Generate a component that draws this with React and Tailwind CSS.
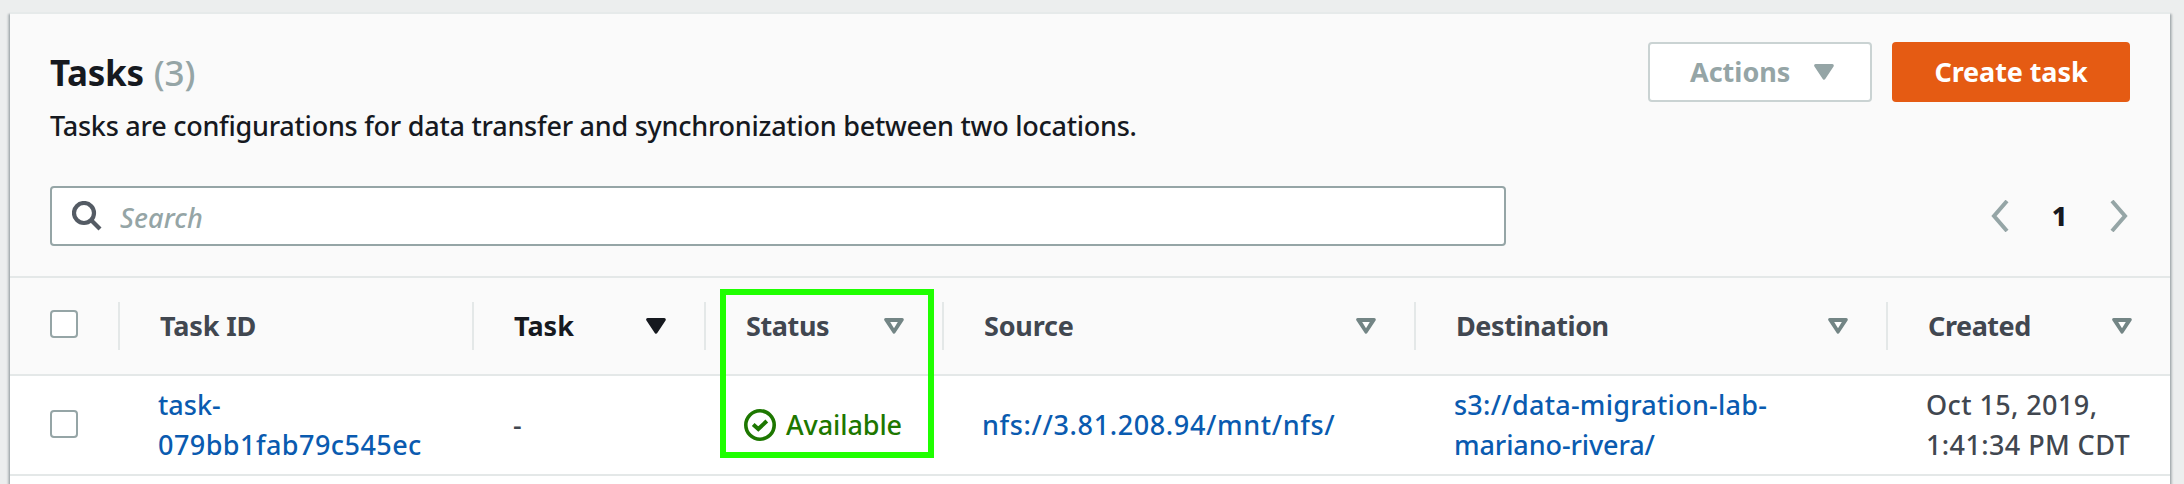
function Caret({ className = '' }) {
  return (
    <svg viewBox="0 0 20 16" className={`h-4 w-5 shrink-0 ${className}`}>
      <path d="M1.7 1.6 H18.3 L10 14.2 Z" fill="currentColor" stroke="currentColor" strokeWidth="3" strokeLinejoin="round" />
    </svg>
  );
}

function CaretOutline() {
  return (
    <svg viewBox="0 0 20 16" className="h-4 w-5 shrink-0 text-[#738585]">
      <path d="M1.7 1.6 H18.3 L10 14.2 Z" fill="currentColor" stroke="currentColor" strokeWidth="3" strokeLinejoin="round" />
      <path d="M6.2 3.9 H13.8 L10 10.2 Z" fill="#fff" />
    </svg>
  );
}

function Checkbox() {
  return <span className="block size-7 rounded-[4px] border-2 border-[#95a5a6] bg-white" />;
}

function HeaderCell({ label, tracking = '', color = 'text-[#414750]', children }) {
  return (
    <div className="flex h-12 items-center justify-between border-l-2 border-[#e4e8e8] pr-[38px] pl-10">
      <span className={`text-[27px] leading-10 font-bold ${tracking} ${color}`}>{label}</span>
      {children}
    </div>
  );
}

const columns = 'grid grid-cols-[108px_354px_232px_238px_472px_472px_284px]';

export default function App() {
  return (
    <div className="relative h-[484px] w-[2184px] overflow-hidden bg-[#eceeee] pt-3 pr-3.5 pl-2.5 font-['Noto_Sans',sans-serif] font-medium text-[#414750]">
      <main className="h-[500px] border-t-2 border-[#e6eaea] bg-white shadow-[0_2px_2px_0_rgba(0,28,36,0.3),2px_2px_2px_0_rgba(0,28,36,0.22),-2px_2px_2px_0_rgba(0,28,36,0.22)]">
        <header className="h-[262px] bg-[#fafafa] px-10 pt-7">
          <div className="flex items-start justify-between">
            <div className="pt-[9px]">
              <h1 className="flex gap-2.5 text-[35px] leading-[44px] text-[#16191f]">
                <span className="font-bold tracking-[-0.3px]">Tasks</span>
                <span className="tracking-[-0.1px] text-[#95a5a6]">(3)</span>
              </h1>
              <p className="mt-[11px] text-[27px] leading-10 tracking-[-0.25px] whitespace-nowrap text-[#16191f]">
                Tasks are configurations for data transfer and synchronization between two locations.
              </p>
            </div>
            <div className="flex gap-5 text-[27px] font-bold">
              <button className="flex h-[60px] w-[224px] items-center justify-between rounded-[4px] border-2 border-[#cad3d3] bg-white pr-9 pl-10 text-[#95a5a6]">
                Actions
                <Caret />
              </button>
              <button className="h-[60px] w-[238px] rounded-[4px] bg-[#e55b13] tracking-[-0.1px] text-white">
                Create task
              </button>
            </div>
          </div>
          <div className="mt-10 flex items-center justify-between">
            <div className="flex h-[60px] w-[1456px] items-center gap-[18px] rounded-[4px] border-2 border-[#95a5a6] bg-white pl-5">
              <svg viewBox="0 0 30 30" className="size-[30px] text-[#545b64]" fill="none" stroke="currentColor" strokeWidth="4.2">
                <circle cx="12" cy="12" r="10" />
                <path d="M19 19 L28 28" />
              </svg>
              <span className="pt-[3px] text-[27px] leading-10 tracking-[0.15px] text-[#95a5a6] italic">Search</span>
            </div>
            <nav className="flex items-center text-[#95a5a6]">
              <svg viewBox="0 0 18 32" className="h-8 w-[18px]" fill="none" stroke="currentColor" strokeWidth="4">
                <path d="M16 1 L3 16 L16 31" />
              </svg>
              <span className="w-[101px] text-center text-[27px] leading-10 font-extrabold text-[#16191f]">1</span>
              <svg viewBox="0 0 18 32" className="mr-0.5 h-8 w-[18px]" fill="none" stroke="currentColor" strokeWidth="4">
                <path d="M2 1 L15 16 L2 31" />
              </svg>
            </nav>
          </div>
        </header>
        <div className={`${columns} h-[100px] items-center border-y-2 border-[#e4e8e8] bg-[#fafafa]`}>
          <div className="-mt-1 pl-10"><Checkbox /></div>
          <HeaderCell label="Task ID" tracking="tracking-[-0.15px]" />
          <HeaderCell label="Task" color="text-[#16191f]"><Caret className="text-[#16191f]" /></HeaderCell>
          <HeaderCell label="Status" tracking="tracking-[-0.4px]"><CaretOutline /></HeaderCell>
          <HeaderCell label="Source" tracking="tracking-[-0.2px]"><CaretOutline /></HeaderCell>
          <HeaderCell label="Destination" tracking="tracking-[-0.4px]"><CaretOutline /></HeaderCell>
          <HeaderCell label="Created" tracking="tracking-[-0.45px]"><CaretOutline /></HeaderCell>
        </div>
        <div className={`${columns} h-[100px] items-center border-b-2 border-[#e4e8e8] text-[27px] leading-10`}>
          <div className="-mt-0.5 pl-10"><Checkbox /></div>
          <div className="pl-10 text-[#0a5bb0]">task-<br /><span className="tracking-[0.44px]">079bb1fab79c545ec</span></div>
          <div className="pl-[41px]">-</div>
          <div className="flex items-center gap-2.5 pl-10 text-[#1d7700]">
            <svg viewBox="0 0 32 32" className="size-8 shrink-0" fill="none" stroke="currentColor">
              <circle cx="16" cy="16" r="14.2" strokeWidth="3.6" />
              <path d="M9.2 15.4 L14.3 20 L22.8 12" strokeWidth="4" />
            </svg>
            <span className="tracking-[-0.1px]">Available</span>
          </div>
          <div className="pl-10 tracking-[0.62px] text-[#0a5bb0]">nfs://3.81.208.94/mnt/nfs/</div>
          <div className="pl-10 text-[#0a5bb0]"><span className="tracking-[0.25px]">s3://data-migration-lab-</span><br /><span className="tracking-[-0.1px]">mariano-rivera/</span></div>
          <div className="pl-10 tracking-[0.4px] whitespace-nowrap">Oct 15, 2019,<br />1:41:34 PM CDT</div>
        </div>
      </main>
      <div className="absolute top-[289px] left-[720px] h-[169px] w-[214px] border-6 border-[#1fff00]" />
    </div>
  );
}
